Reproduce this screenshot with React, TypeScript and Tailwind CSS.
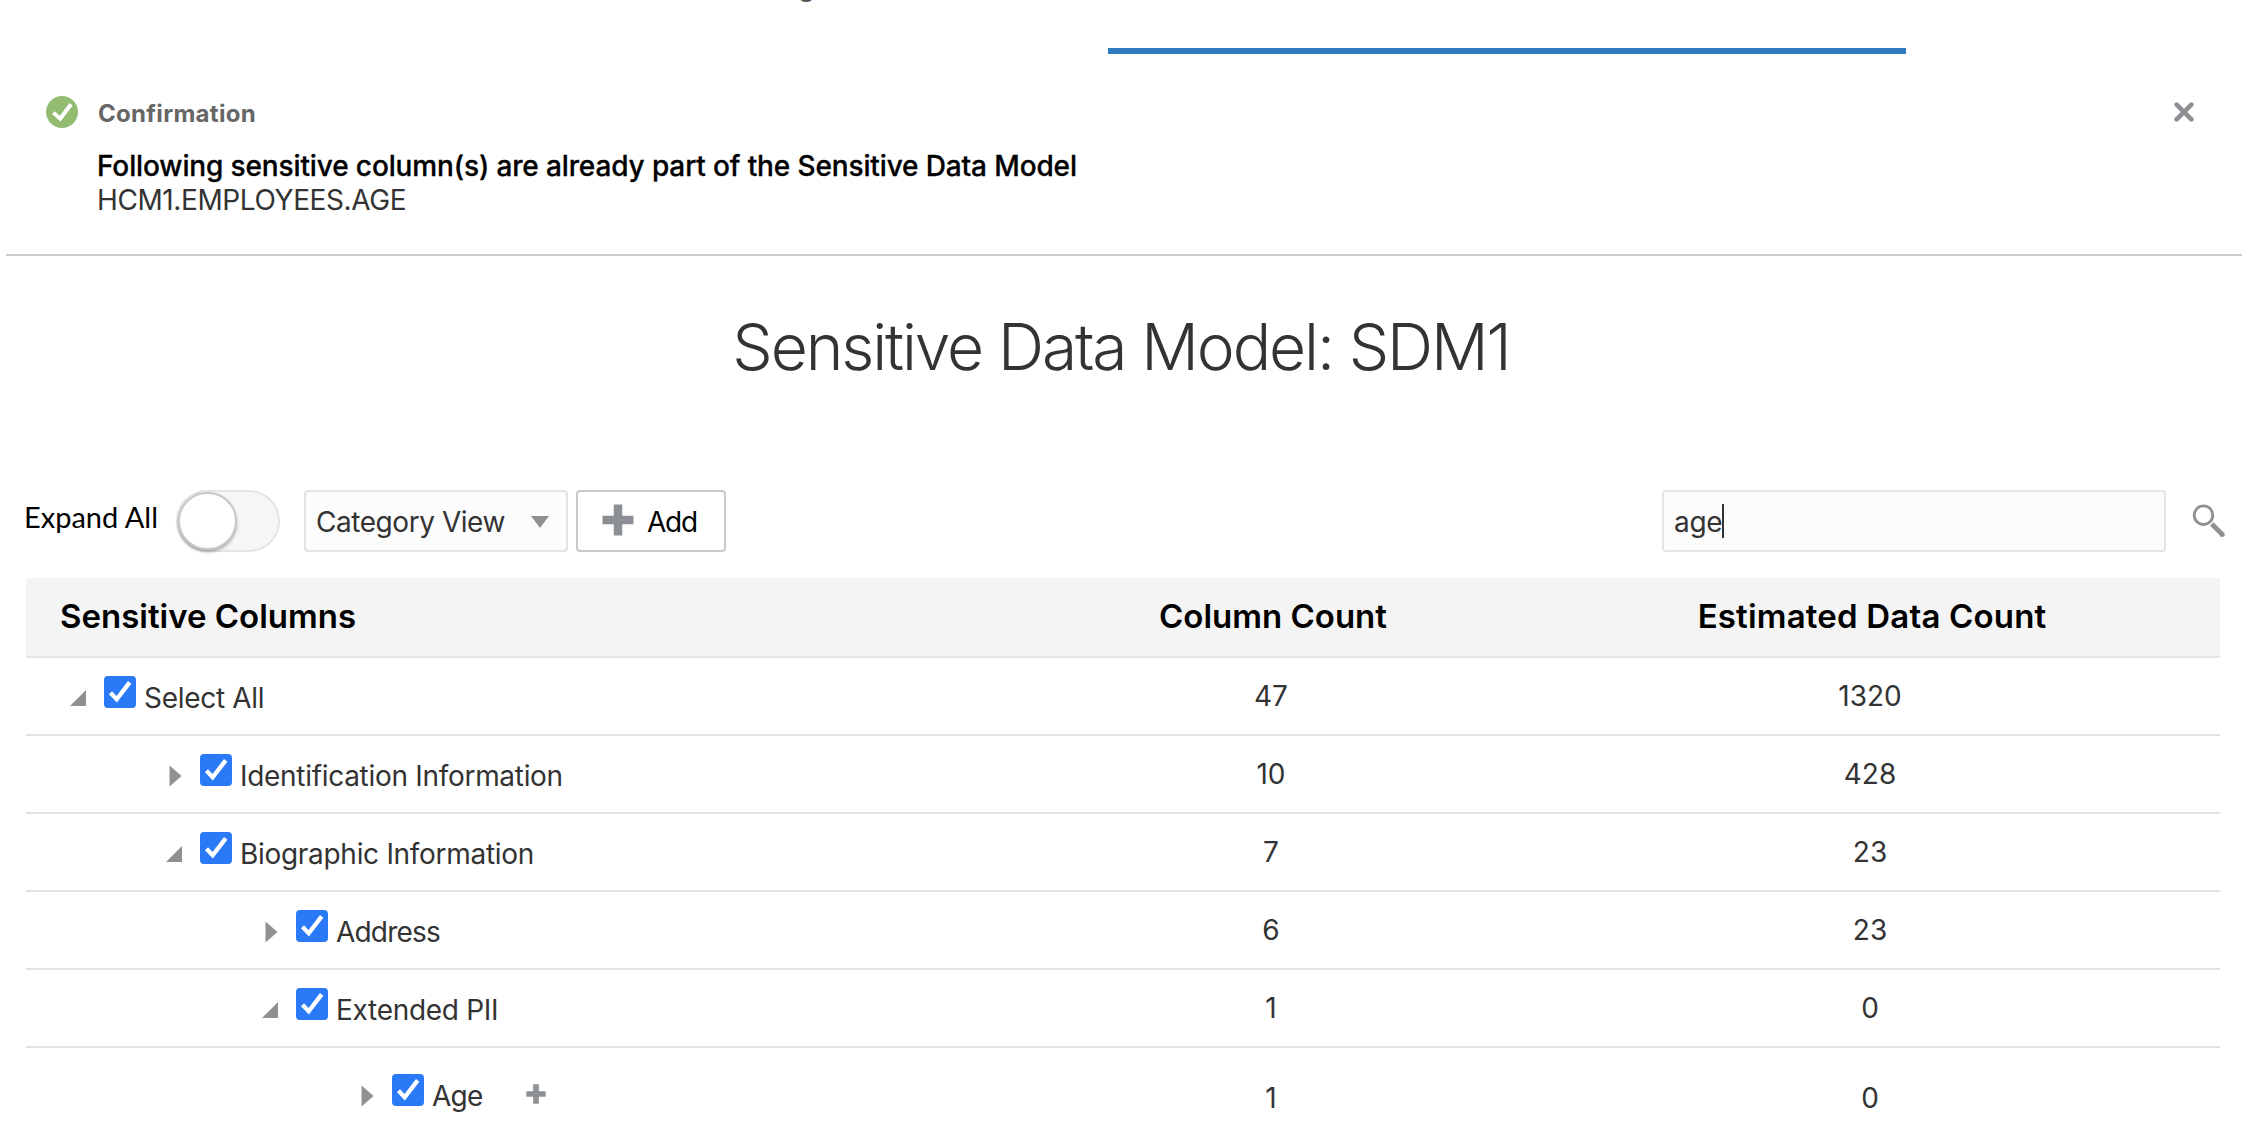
type Row = {
  label: string;
  indent: string;
  open: boolean;
  columns: string;
  data: string;
  last?: boolean;
};

const rows: Row[] = [
  { label: 'Select All', indent: 'pl-[40px]', open: true, columns: '47', data: '1320' },
  { label: 'Identification Information', indent: 'pl-[136px]', open: false, columns: '10', data: '428' },
  { label: 'Biographic Information', indent: 'pl-[136px]', open: true, columns: '7', data: '23' },
  { label: 'Address', indent: 'pl-[232px]', open: false, columns: '6', data: '23' },
  { label: 'Extended PII', indent: 'pl-[232px]', open: true, columns: '1', data: '0' },
  { label: 'Age', indent: 'pl-[328px]', open: false, columns: '1', data: '0', last: true },
];

function SuccessIcon() {
  return (
    <svg className="size-8 shrink-0" viewBox="0 0 32 32">
      <circle cx="16" cy="16" r="16" fill="#93bc71" />
      <path d="M7.3 16.7l7 6L25 8.3" fill="none" stroke="#fff" strokeWidth="4" />
    </svg>
  );
}

function CloseIcon() {
  return (
    <svg className="size-5" viewBox="0 0 20 20">
      <path d="M2.6 2.6l14.8 14.8M17.4 2.6L2.6 17.4" stroke="#8c8e91" strokeWidth="4.6" strokeLinecap="round" />
    </svg>
  );
}

function PlusIcon({ className, width }: { className: string; width: number }) {
  return (
    <svg className={className} viewBox="0 0 32 32">
      <path d="M16 .5v31M.5 16h31" stroke="#8c8f93" strokeWidth={width} />
    </svg>
  );
}

function SearchIcon() {
  return (
    <svg className="size-[34px]" viewBox="0 0 34 34">
      <circle cx="11.5" cy="11.2" r="9.3" fill="none" stroke="#8e9091" strokeWidth="2.8" />
      <path d="M19.8 20l10.6 10.6" stroke="#8e9091" strokeWidth="4.8" />
      <circle cx="30.2" cy="30.4" r="2.5" fill="#8e9091" />
    </svg>
  );
}

function Caret({ open }: { open: boolean }) {
  return (
    <svg className="h-[22px] w-5 shrink-0" viewBox="0 0 20 22">
      {open ? <path d="M4 19L20 3v16z" fill="#8e9092" /> : <path d="M7.5 .5v21L19.5 11z" fill="#8e9092" />}
    </svg>
  );
}

function Check() {
  return (
    <span className="block size-8 shrink-0 rounded-[4px] bg-[#2a7af8]">
      <svg className="size-8" viewBox="0 0 32 32">
        <path d="M6.5 16.8l6.2 6.4L25.7 6.4" fill="none" stroke="#fff" strokeWidth="4.3" />
      </svg>
    </span>
  );
}

function TreeRow({ row }: { row: Row }) {
  return (
    <div className={row.last ? 'flex h-[88px] pt-[26px]' : 'flex h-[78px] border-b-2 border-[#e2e2e2] pt-[18px]'}>
      <div className={`flex w-[1117px] items-start ${row.indent}`}>
        <div className="pt-[11px]">
          <Caret open={row.open} />
        </div>
        <div className="ml-[18px]">
          <Check />
        </div>
        <span
          className={
            row.label.length < 8
              ? 'ml-[8px] pt-[5px] leading-[34px] tracking-[-0.8px]'
              : 'ml-[8px] pt-[5px] leading-[34px] tracking-[-0.3px]'
          }
        >
          {row.label}
        </span>
        {row.last && (
          <div className="ml-[44px] pt-[10px]">
            <PlusIcon className="size-5" width={9} />
          </div>
        )}
      </div>
      <span className={row.last ? 'w-[256px] pt-[7px] text-center leading-[34px]' : 'w-[256px] pt-[3px] text-center leading-[34px]'}>
        {row.columns}
      </span>
      <span
        className={
          row.last
            ? 'ml-[343px] w-[256px] pt-[7px] text-center leading-[34px]'
            : 'ml-[343px] w-[256px] pt-[3px] text-center leading-[34px]'
        }
      >
        {row.data}
      </span>
    </div>
  );
}

export default function App() {
  return (
    <main className="h-[1136px] w-[2248px] overflow-hidden bg-white font-['Inter',sans-serif] text-[28px] text-[#333333]">
      <div className="h-[48px]">
        <div className="ml-[798px] flex h-[2px] flex-col justify-end overflow-hidden">
          <span className="-mb-px text-[28px] leading-[34px] text-[#555555]">g</span>
        </div>
      </div>
      <div className="ml-[1108px] h-[6px] w-[798px] bg-[#2f7bbf]" />

      <section className="mx-[6px] flex h-[202px] items-start border-b-2 border-[#cccccc] pt-[42px] pr-[48px] pl-[40px]">
        <SuccessIcon />
        <div className="ml-[19px] flex flex-1 flex-col pt-[3px]">
          <h2 className="pl-px text-[24px] leading-[29px] font-bold tracking-[0.3px] text-[#666666]">Confirmation</h2>
          <p className="mt-[21px] leading-[34px] font-medium tracking-[-0.13px] text-black [-webkit-text-stroke:0.3px_black]">
            Following sensitive column(s) are already part of the Sensitive Data Model
          </p>
          <p className="leading-[34px] tracking-[-0.4px]">HCM1.EMPLOYEES.AGE</p>
        </div>
        <button className="mt-[6px] block">
          <CloseIcon />
        </button>
      </section>

      <h1 className="mt-[52px] pr-[6px] text-center text-[64px] leading-[78px] font-light tracking-[-2.1px]">
        Sensitive Data Model: SDM1
      </h1>

      <div className="mt-[104px] flex h-[62px] items-start pr-[22px] pl-[24px]">
        <span className="w-[152px] pt-[9px] font-['Lato',sans-serif] text-[29px] leading-[35px] whitespace-nowrap text-black">
          Expand All
        </span>
        <button className="flex h-[62px] w-[104px] rounded-full border-2 border-[#e5e5e5] bg-[#f6f6f6]">
          <span className="block size-[59px] h-[58px] rounded-full border-2 border-[#c6c8c9] bg-white shadow-[0_2px_3px_rgba(0,0,0,0.3)]" />
        </button>
        <div className="ml-[24px] flex h-[62px] w-[264px] rounded-[4px] border-2 border-[#e4e4e4] bg-[#fcfcfc] pt-[13px] pl-[10px]">
          <span className="w-[215px] leading-[34px] tracking-[-0.45px]">Category View</span>
          <svg className="mt-[11px] h-3 w-[18px]" viewBox="0 0 18 12">
            <path d="M0 0h18L9 12z" fill="#8e9092" />
          </svg>
        </div>
        <button className="ml-[8px] flex h-[62px] w-[150px] items-start rounded-[4px] border-2 border-[#c9c9c9] bg-white pl-[24px] text-black">
          <PlusIcon className="mt-[12px] size-8" width={8.5} />
          <span className="mt-[13px] ml-[13px] leading-[34px] tracking-[-1.2px]">Add</span>
        </button>
        <div className="ml-auto flex h-[62px] w-[504px] rounded-[4px] border-2 border-[#e4e4e4] bg-[#fcfcfc] pt-[12px] pl-[10px]">
          <span className="pt-px leading-[34px] tracking-[-0.3px]">age</span>
          <span className="h-[34px] w-[2px] bg-[#333333]" />
        </div>
        <div className="mt-[14px] ml-[26px]">
          <SearchIcon />
        </div>
      </div>

      <section className="mt-[26px] mr-[28px] ml-[26px]">
        <header className="flex h-[80px] border-b-2 border-[#e5e5e5] bg-[#f4f4f4] pt-[18px] text-[33px] leading-[40px] font-semibold text-black">
          <span className="w-[1117px] pl-[34px]">Sensitive Columns</span>
          <span className="w-[260px] text-center">Column Count</span>
          <span className="ml-[244px] w-[450px] text-center tracking-[0.18px]">Estimated Data Count</span>
        </header>
        {rows.map((row) => (
          <TreeRow key={row.label} row={row} />
        ))}
      </section>
    </main>
  );
}
